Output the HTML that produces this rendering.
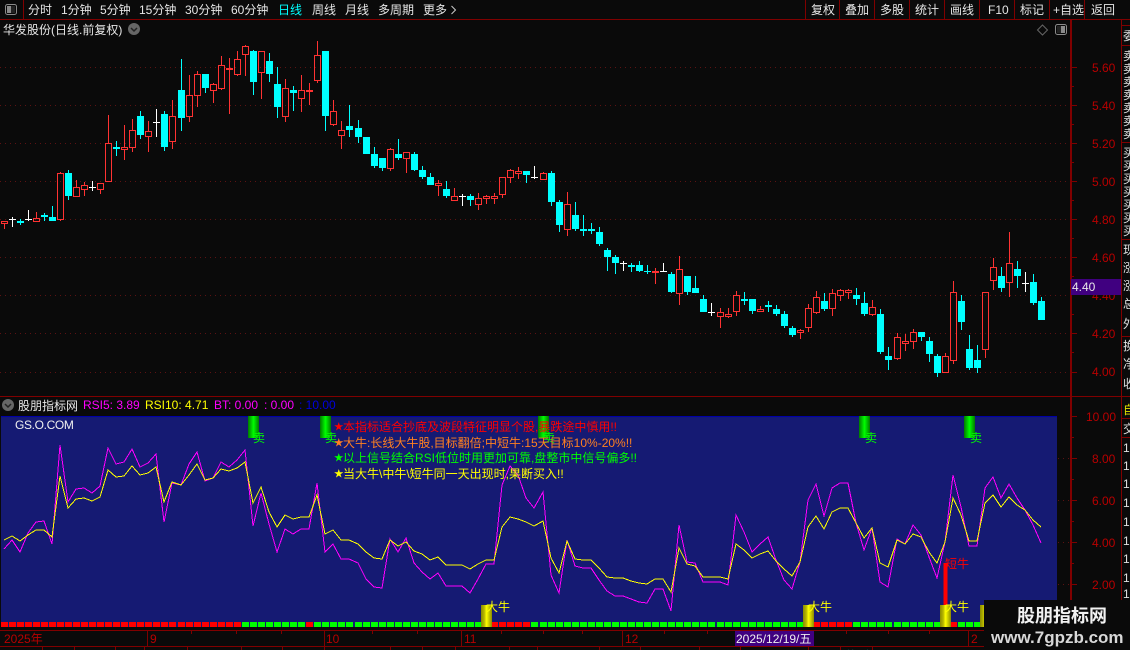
<!DOCTYPE html>
<html><head><meta charset="utf-8"><title>K线</title>
<style>
html,body{margin:0;padding:0;background:#0a0a0a;width:1130px;height:650px;overflow:hidden}
svg{display:block;position:absolute;left:0;top:0}
text{font-family:"Liberation Sans","WenQuanYi Zen Hei","Noto Sans CJK SC",sans-serif;font-size:12px;white-space:pre}
.t{fill:#e6e6e6}
.a{fill:#b80000}
.s{font-size:9.5px}
</style></head>
<body>
<svg width="1130" height="650" viewBox="0 0 1130 650" xmlns="http://www.w3.org/2000/svg">
<defs>
<linearGradient id="gg" x1="0" x2="1" y1="0" y2="0"><stop offset="0" stop-color="#007a00"/><stop offset=".3" stop-color="#00c800"/><stop offset=".5" stop-color="#00ff00"/><stop offset=".7" stop-color="#00c800"/><stop offset="1" stop-color="#007a00"/></linearGradient>
<linearGradient id="yy" x1="0" x2="1" y1="0" y2="0"><stop offset="0" stop-color="#8a8a00"/><stop offset=".3" stop-color="#b8b800"/><stop offset=".5" stop-color="#ffff00"/><stop offset=".7" stop-color="#d0d000"/><stop offset="1" stop-color="#8a8a00"/></linearGradient>
<clipPath id="rc"><rect x="1123" y="20" width="7" height="630"/></clipPath>
</defs>
<rect width="1130" height="650" fill="#0a0a0a"/>

<!-- toolbar -->
<g shape-rendering="crispEdges" fill="#800000">
<rect x="0" y="19" width="1130" height="1"/>
<rect x="23" y="0" width="1" height="19"/>
<rect x="805" y="0" width="1" height="19"/><rect x="839" y="0" width="1" height="19"/><rect x="874" y="0" width="1" height="19"/><rect x="909" y="0" width="1" height="19"/><rect x="944" y="0" width="1" height="19"/><rect x="979" y="0" width="1" height="19"/><rect x="1014" y="0" width="1" height="19"/><rect x="1049" y="0" width="1" height="19"/><rect x="1084" y="0" width="1" height="19"/>
</g>
<rect x="5.5" y="4.5" width="11" height="10" rx="2" fill="none" stroke="#8a8a8a"/>
<rect x="7" y="6" width="4" height="7" fill="#8a8a8a"/>
<rect x="11" y="6" width="4" height="7" fill="#222"/>
<g class="t">
<text x="28" y="14">分时</text><text x="61" y="14">1分钟</text><text x="100" y="14">5分钟</text><text x="139" y="14">15分钟</text><text x="185" y="14">30分钟</text><text x="231" y="14">60分钟</text>
<text x="278" y="14" style="fill:#00ffff">日线</text><text x="312" y="14">周线</text><text x="345" y="14">月线</text><text x="378" y="14">多周期</text><text x="423" y="14">更多</text>
<text x="811" y="14">复权</text><text x="845" y="14">叠加</text><text x="880" y="14">多股</text><text x="915" y="14">统计</text><text x="950" y="14">画线</text><text x="988" y="14">F10</text><text x="1020" y="14">标记</text><text x="1053" y="14">+自选</text><text x="1091" y="14">返回</text>
<text x="3" y="34">华发股份(日线.前复权)</text>
</g>
<path d="M451.5 6l4 4-4 4" fill="none" stroke="#ccc"/>
<circle cx="134" cy="29" r="6" fill="#666"/>
<path d="M131 28l3 3 3-3" fill="none" stroke="#222" stroke-width="1.5"/>
<path d="M1042.5 25l5 5-5 5-5-5z" fill="none" stroke="#666"/>
<rect x="1055.5" y="24.5" width="11" height="10" rx="2" fill="none" stroke="#8a8a8a"/>
<rect x="1057" y="26" width="4" height="7" fill="#222"/><rect x="1061" y="26" width="4" height="7" fill="#8a8a8a"/>

<!-- grid -->
<g stroke="#5c1212" stroke-dasharray="1 4" shape-rendering="crispEdges">
<path d="M0 67.5H1068M0 105.5H1068M0 143.5H1068M0 181.5H1068M0 219.5H1068M0 257.5H1068M0 295.5H1068M0 333.5H1068M0 372.5H1068"/>
</g>

<!-- cyan -->
<g shape-rendering="crispEdges" fill="none" stroke="#00ffff">
<path d="M20.5 219V225M44.5 213V221M52.5 206V221M68.5 170V200M116.5 141V156M140.5 111V139M164.5 111V151M181.5 59V131M205.5 74V93M253.5 50V95M269.5 53V82M277.5 67V118M293.5 86V111M325.5 51V131M349.5 105V137M358.5 120V143M374.5 147V168M382.5 158V171M398.5 139V160M414.5 152V171M422.5 166V179M430.5 173V185M446.5 181V198M470.5 194V206M526.5 171V183M551.5 171V206M559.5 200V232M575.5 202V231M583.5 215V236M591.5 223V234M599.5 227V246M607.5 248V271M615.5 255V274M631.5 263V272M639.5 261V272M647.5 265V274M671.5 272V293M687.5 276V295M695.5 276V293M703.5 295V312M744.5 292V305M752.5 299V314M768.5 301V312M776.5 305V316M784.5 311V328M792.5 326V337M824.5 293V311M856.5 288V305M864.5 292V316M880.5 309V354M888.5 347V370M921.5 332V341M929.5 337V362M937.5 354V377M961.5 295V330M969.5 335V370M977.5 345V373M1001.5 267V292M1017.5 261V288M1033.5 274V305M1041.5 297V320"/>
<path stroke-width="7" d="M20.5 221V223M44.5 215V217M52.5 217V221M68.5 173V196M116.5 147V149M140.5 116V135M164.5 114V147M181.5 90V118M205.5 74V88M253.5 51V82M269.5 61V74M277.5 84V107M293.5 90V93M325.5 51V116M349.5 126V130M358.5 128V137M366.5 137V154M374.5 154V166M382.5 158V168M398.5 154V158M414.5 154V170M422.5 170V177M430.5 177V185M446.5 189V196M470.5 196V200M526.5 171V175M551.5 173V202M559.5 202V225M575.5 215V229M583.5 229V231M591.5 229V231M599.5 232V244M607.5 250V257M615.5 257V263M631.5 265V267M639.5 265V271M647.5 271V272M671.5 274V292M687.5 276V292M695.5 288V293M703.5 299V312M744.5 299V301M752.5 299V311M768.5 305V307M776.5 309V314M784.5 314V326M792.5 328V335M824.5 301V309M856.5 295V299M864.5 303V314M880.5 314V352M888.5 356V360M921.5 332V337M929.5 341V354M937.5 356V373M961.5 301V322M969.5 349V368M977.5 360V368M1001.5 276V288M1017.5 269V276M1033.5 282V303M1041.5 301V320"/>
</g>

<!-- white -->
<g shape-rendering="crispEdges" fill="none" stroke="#ffffff">
<path d="M12.5 217V227M9 219.5h7M28.5 210V221M25 219.5h7M92.5 181V191M89 187.5h7M156.5 109V137M153 122.5h7M462.5 194V206M459 196.5h7M534.5 166V179M531 177.5h7M623.5 261V271M620 263.5h7M663.5 263V272M660 271.5h7M711.5 303V316M708 312.5h7M1025.5 272V292M1022 283.5h7"/>
</g>

<!-- red -->
<g shape-rendering="crispEdges" fill="none" stroke="#ff3232">
<path d="M4.5 224V229M36.5 212V218M76.5 180V187M84.5 182V185M84.5 190V196M100.5 190V194M60.5 172V173M60.5 220V221M108.5 115V143M124.5 125V147M124.5 150V160M132.5 119V130M132.5 148V152M148.5 121V131M148.5 137V152M172.5 100V116M172.5 142V149M189.5 75V95M189.5 117V122M197.5 71V74M197.5 96V107M213.5 83V84M213.5 91V103M221.5 56V65M221.5 89V90M229.5 58V68M229.5 70V114M237.5 51V59M237.5 75V76M245.5 45V46M245.5 55V76M261.5 73V99M285.5 79V88M285.5 117V122M301.5 75V90M301.5 99V112M309.5 83V105M317.5 41V55M317.5 81V83M333.5 100V111M333.5 125V126M341.5 121V130M341.5 136V149M390.5 148V149M390.5 169V171M406.5 159V173M438.5 180V183M438.5 186V196M454.5 188V196M478.5 193V198M478.5 205V210M486.5 195V196M486.5 199V204M494.5 193V196M494.5 199V204M502.5 195V198M510.5 169V170M510.5 178V183M518.5 167V171M518.5 174V179M543.5 172V173M567.5 192V204M567.5 230V236M655.5 268V284M679.5 256V269M679.5 294V305M720.5 308V312M720.5 317V328M728.5 308V314M728.5 317V318M736.5 291V295M736.5 312V316M760.5 306V309M800.5 329V330M800.5 333V339M808.5 304V308M808.5 328V332M816.5 291V297M816.5 313V314M832.5 289V293M832.5 309V316M840.5 289V290M840.5 296V301M848.5 289V290M848.5 293V299M872.5 300V307M872.5 315V316M897.5 333V337M897.5 359V360M905.5 334V341M905.5 344V351M913.5 329V332M913.5 342V349M945.5 353V356M953.5 281V292M953.5 361V364M985.5 350V358M993.5 258V267M993.5 281V290M1009.5 232V263M1009.5 283V297"/>
<path d="M1.5 221.5h6v2h-6zM33.5 218.5h6v3h-6zM57.5 173.5h6v46h-6zM73.5 187.5h6v9h-6zM81.5 185.5h6v4h-6zM97.5 183.5h6v6h-6zM105.5 143.5h6v38h-6zM121.5 147.5h6v2h-6zM129.5 130.5h6v17h-6zM145.5 131.5h6v5h-6zM169.5 116.5h6v25h-6zM186.5 95.5h6v21h-6zM194.5 74.5h6v21h-6zM210.5 84.5h6v6h-6zM218.5 65.5h6v23h-6zM226.5 68.5h6v1h-6zM234.5 59.5h6v15h-6zM242.5 46.5h6v8h-6zM258.5 51.5h6v21h-6zM282.5 88.5h6v28h-6zM298.5 90.5h6v8h-6zM314.5 55.5h6v25h-6zM330.5 111.5h6v13h-6zM338.5 130.5h6v5h-6zM387.5 149.5h6v19h-6zM403.5 152.5h6v6h-6zM435.5 183.5h6v2h-6zM451.5 196.5h6v4h-6zM475.5 198.5h6v6h-6zM483.5 196.5h6v2h-6zM491.5 196.5h6v2h-6zM499.5 177.5h6v17h-6zM507.5 170.5h6v7h-6zM515.5 171.5h6v2h-6zM540.5 173.5h6v6h-6zM564.5 204.5h6v25h-6zM676.5 269.5h6v24h-6zM717.5 312.5h6v4h-6zM725.5 314.5h6v2h-6zM733.5 295.5h6v16h-6zM757.5 309.5h6v2h-6zM797.5 330.5h6v2h-6zM805.5 308.5h6v19h-6zM813.5 297.5h6v15h-6zM829.5 293.5h6v15h-6zM837.5 290.5h6v5h-6zM845.5 290.5h6v2h-6zM869.5 307.5h6v7h-6zM894.5 337.5h6v21h-6zM902.5 341.5h6v2h-6zM910.5 332.5h6v9h-6zM942.5 356.5h6v16h-6zM950.5 292.5h6v68h-6zM982.5 292.5h6v57h-6zM990.5 267.5h6v13h-6zM1006.5 263.5h6v19h-6z"/>
<path stroke-width="2" d="M306 91h7M652 272h7"/>
</g>

<!-- right axis main -->
<g shape-rendering="crispEdges" fill="#800000">
<rect x="1070" y="20" width="2" height="610"/>
<rect x="1121" y="20" width="1" height="630"/>
<rect x="0" y="396" width="1130" height="1"/>
<rect x="1071" y="67" width="6" height="1"/><rect x="1071" y="86" width="3" height="1"/><rect x="1071" y="105" width="6" height="1"/><rect x="1071" y="124" width="3" height="1"/><rect x="1071" y="143" width="6" height="1"/><rect x="1071" y="162" width="3" height="1"/><rect x="1071" y="181" width="6" height="1"/><rect x="1071" y="200" width="3" height="1"/><rect x="1071" y="219" width="6" height="1"/><rect x="1071" y="238" width="3" height="1"/><rect x="1071" y="257" width="6" height="1"/><rect x="1071" y="276" width="3" height="1"/><rect x="1071" y="333" width="6" height="1"/><rect x="1071" y="314" width="3" height="1"/><rect x="1071" y="352" width="3" height="1"/><rect x="1071" y="372" width="6" height="1"/>
<rect x="1122" y="25" width="8" height="1"/><rect x="1122" y="45" width="8" height="1"/><rect x="1122" y="142" width="8" height="1"/><rect x="1122" y="239" width="8" height="1"/><rect x="1122" y="336" width="8" height="1"/><rect x="1122" y="418" width="8" height="1"/><rect x="1122" y="437" width="8" height="1"/>
</g>
<g class="a">
<text x="1092" y="72">5.60</text><text x="1092" y="110">5.40</text><text x="1092" y="148">5.20</text><text x="1092" y="186">5.00</text><text x="1092" y="224">4.80</text><text x="1092" y="262">4.60</text><text x="1092" y="300">4.40</text><text x="1092" y="338">4.20</text><text x="1092" y="376">4.00</text>
</g>
<rect x="1071" y="279" width="50" height="16" fill="#400080"/>
<text x="1072" y="291" fill="#e8e8e8">4.40</text>

<!-- right column -->
<g clip-path="url(#rc)" fill="#e0e0e0">
<text x="1123" y="40">委</text>
<text x="1123" y="60">卖</text><text x="1123" y="73">卖</text><text x="1123" y="86">卖</text><text x="1123" y="99">卖</text><text x="1123" y="112">卖</text><text x="1123" y="125">卖</text><text x="1123" y="138">卖</text>
<text x="1123" y="157">买</text><text x="1123" y="170">买</text><text x="1123" y="183">买</text><text x="1123" y="196">买</text><text x="1123" y="209">买</text><text x="1123" y="222">买</text><text x="1123" y="235">买</text>
<text x="1123" y="254">现</text><text x="1123" y="272">涨</text><text x="1123" y="290">涨</text><text x="1123" y="308">总</text><text x="1123" y="328">外</text>
<text x="1123" y="350">换</text><text x="1123" y="368">净</text><text x="1123" y="388">收</text>
<text x="1123" y="433">交</text>
<text x="1123" y="452">1</text><text x="1123" y="470">1</text><text x="1123" y="488">1</text><text x="1123" y="507">1</text><text x="1123" y="526">1</text><text x="1123" y="545">1</text><text x="1123" y="563">1</text><text x="1123" y="582">1</text><text x="1123" y="598">1</text>
<text x="1123" y="414" style="fill:#e0e000">自</text>
</g>

<!-- sub header -->
<circle cx="8" cy="405" r="6" fill="#666"/>
<path d="M5 404l3 3 3-3" fill="none" stroke="#222" stroke-width="1.5"/>
<text x="18" y="410" class="t">股朋指标网</text>
<text x="83" y="409" fill="#ff00ff">RSI5: 3.89</text>
<text x="145" y="409" fill="#ffff00">RSI10: 4.71</text>
<text x="214" y="409" fill="#ff00ff">BT: 0.00</text>
<text x="264" y="409" fill="#ff00ff">: 0.00</text>
<text x="299" y="409" fill="#0000e0">: 10.00</text>

<!-- blue panel -->
<rect x="1" y="416" width="1056" height="211" fill="#151a73"/>
<rect x="1" y="416" width="1056" height="1" fill="#0000a8"/>
<text x="15" y="429" fill="#f0f0f0" style="letter-spacing:-.35px">GS.O.COM</text>

<!-- sell bars -->
<g shape-rendering="crispEdges" fill="url(#gg)">
<rect x="248" y="416" width="11" height="22"/><rect x="320" y="416" width="11" height="22"/><rect x="538" y="416" width="11" height="22"/><rect x="859" y="416" width="11" height="22"/><rect x="964" y="416" width="11" height="22"/>
</g>
<g fill="#00ff00">
<text x="253" y="442">卖</text><text x="325" y="442">卖</text><text x="543" y="442">卖</text><text x="865" y="442">卖</text><text x="970" y="442">卖</text>
</g>

<!-- lines -->
<polyline shape-rendering="crispEdges" fill="none" stroke="#ff00ff" points="4,549 12,540 20,552 28,533 36,522 44,521 52,544 60,445 68,502 76,489 84,488 92,493 100,486 108,448 116,464 124,462 132,449 140,467 148,463 156,454 164,522 172,483 181,485 189,464 197,452 205,481 213,478 221,462 229,467 237,460 245,450 253,526 261,493 269,524 277,552 285,529 293,534 301,529 309,529 317,483 325,552 333,544 341,559 349,559 358,563 366,579 374,587 382,588 390,539 398,552 406,538 414,563 422,572 430,579 438,573 446,586 454,586 462,586 470,593 478,579 486,564 494,564 502,485 510,466 518,475 526,498 534,508 543,492 551,575 559,593 567,540 575,566 583,568 591,568 599,580 607,591 615,596 623,596 631,599 639,602 647,603 655,589 663,589 671,611 679,525 687,562 695,563 703,582 711,582 720,582 728,585 736,515 744,532 752,552 760,544 768,537 776,560 784,580 792,589 800,562 808,500 816,484 824,516 832,488 840,483 848,483 856,523 864,550 872,528 880,582 888,587 897,539 905,544 913,525 921,535 929,557 937,578 945,542 953,475 961,507 969,546 977,546 985,488 993,477 1001,498 1009,484 1017,498 1025,510 1033,525 1041,543"/>
<polyline shape-rendering="crispEdges" fill="none" stroke="#ffff00" points="4,540 12,536 20,541 28,535 36,530 44,530 52,537 60,476 68,508 76,499 84,498 92,501 100,497 108,470 116,477 124,476 132,466 140,475 148,473 156,467 164,502 172,482 181,485 189,475 197,464 205,480 213,478 221,469 229,471 237,468 245,462 253,503 261,487 269,512 277,527 285,515 293,519 301,517 309,517 317,495 325,534 333,530 341,540 349,540 358,544 366,552 374,558 382,559 390,540 398,546 406,542 414,551 422,554 430,560 438,557 446,565 454,565 462,565 470,569 478,564 486,560 494,560 502,527 510,517 518,519 526,522 534,526 543,521 551,558 559,573 567,541 575,559 583,560 591,560 599,568 607,577 615,578 623,578 631,581 639,583 647,584 655,579 663,579 671,592 679,548 687,564 695,566 703,577 711,577 720,577 728,579 736,544 744,550 752,558 760,554 768,551 776,561 784,569 792,576 800,562 808,527 816,516 824,529 832,512 840,508 848,508 856,523 864,538 872,528 880,563 888,567 897,540 905,544 913,534 921,537 929,552 937,563 945,542 953,498 961,515 969,541 977,541 985,503 993,495 1001,507 1009,497 1017,505 1025,510 1033,520 1041,527"/>

<!-- notes -->
<text x="334" y="430" fill="#ff0000" class="s">★</text><text x="343" y="431" fill="#ff0000">本指标适合抄底及波段特征明显个股,暴跌途中慎用!!</text>
<text x="334" y="446" fill="#ff8020" class="s">★</text><text x="343" y="447" fill="#ff8020">大牛:长线大牛股,目标翻倍;中短牛:15天目标10%-20%!!</text>
<text x="334" y="461" fill="#00ff00" class="s">★</text><text x="343" y="462" fill="#00ff00">以上信号结合RSI低位时用更加可靠,盘整市中信号偏多!!</text>
<text x="334" y="477" fill="#ffff00" class="s">★</text><text x="343" y="478" fill="#ffff00">当大牛\中牛\短牛同一天出现时,果断买入!!</text>

<!-- squares -->
<g shape-rendering="crispEdges" fill="none" stroke-width="5" stroke-dasharray="7 1">
<path stroke="#ff0000" d="M1 624.5H177M178 624.5H241M306 624.5H313M491 624.5H531M813 624.5H853M950 624.5H958"/>
<path stroke="#00ff00" d="M242 624.5H305M314 624.5H354M355 624.5H482M531 624.5H539M540 624.5H716M717 624.5H805M853 624.5H893M894 624.5H941M958 624.5H981"/>
</g>

<!-- gold bars -->
<g shape-rendering="crispEdges">
<rect x="945" y="563" width="4" height="42" fill="#ff0000" transform="translate(-1.5 0)"/>
<g fill="url(#yy)"><rect x="481" y="605" width="11" height="22"/><rect x="803" y="605" width="11" height="22"/><rect x="940" y="605" width="11" height="22"/><rect x="980" y="605" width="11" height="22"/></g>
</g>
<g fill="#ffff00">
<text x="486" y="611">大牛</text><text x="808" y="611">大牛</text><text x="945" y="611">大牛</text><text x="986" y="611">大牛</text>
</g>
<text x="945" y="568" fill="#ff0000">短牛</text>

<!-- sub axis -->
<g shape-rendering="crispEdges" fill="#800000">
<rect x="1071" y="416" width="6" height="1"/><rect x="1071" y="437" width="3" height="1"/><rect x="1071" y="458" width="6" height="1"/><rect x="1071" y="479" width="3" height="1"/><rect x="1071" y="500" width="6" height="1"/><rect x="1071" y="521" width="3" height="1"/><rect x="1071" y="542" width="6" height="1"/><rect x="1071" y="563" width="3" height="1"/><rect x="1071" y="584" width="6" height="1"/><rect x="1071" y="605" width="3" height="1"/>
</g>
<path d="M1058 458.5H1070M1058 500.5H1070M1058 542.5H1070M1058 584.5H1070" stroke="#5c1212" stroke-dasharray="1 4" shape-rendering="crispEdges"/>
<g class="a">
<text x="1086" y="421">10.00</text><text x="1092" y="463">8.00</text><text x="1092" y="505">6.00</text><text x="1092" y="547">4.00</text><text x="1092" y="589">2.00</text>
</g>

<!-- date axis -->
<g shape-rendering="crispEdges" fill="#800000">
<rect x="0" y="630" width="1130" height="1"/><rect x="0" y="646" width="1130" height="1"/>
<rect x="147" y="630" width="1" height="16"/><rect x="324" y="630" width="1" height="16"/><rect x="461" y="630" width="1" height="16"/><rect x="622" y="630" width="1" height="16"/><rect x="968" y="630" width="1" height="16"/>
<rect x="191" y="631" width="1" height="3"/><rect x="236" y="631" width="1" height="3"/><rect x="281" y="631" width="1" height="3"/><rect x="372" y="631" width="1" height="3"/><rect x="417" y="631" width="1" height="3"/><rect x="501" y="631" width="1" height="3"/><rect x="543" y="631" width="1" height="3"/><rect x="582" y="631" width="1" height="3"/><rect x="664" y="631" width="1" height="3"/><rect x="707" y="631" width="1" height="3"/><rect x="846" y="631" width="1" height="3"/><rect x="888" y="631" width="1" height="3"/><rect x="929" y="631" width="1" height="3"/>
<rect x="42" y="647" width="1" height="3"/><rect x="74" y="647" width="1" height="3"/><rect x="115" y="647" width="1" height="3"/><rect x="144" y="647" width="1" height="3"/><rect x="187" y="647" width="1" height="3"/><rect x="241" y="647" width="1" height="3"/><rect x="282" y="647" width="1" height="3"/><rect x="324" y="647" width="1" height="3"/><rect x="390" y="647" width="1" height="3"/><rect x="422" y="647" width="1" height="3"/><rect x="455" y="647" width="1" height="3"/><rect x="509" y="647" width="1" height="3"/><rect x="537" y="647" width="1" height="3"/><rect x="599" y="647" width="1" height="3"/><rect x="640" y="647" width="1" height="3"/><rect x="699" y="647" width="1" height="3"/><rect x="740" y="647" width="1" height="3"/><rect x="808" y="647" width="1" height="3"/><rect x="840" y="647" width="1" height="3"/><rect x="872" y="647" width="1" height="3"/>
</g>
<g class="a">
<text x="4" y="643">2025年</text><text x="150" y="643">9</text><text x="326" y="643">10</text><text x="464" y="643">11</text><text x="625" y="643">12</text><text x="971" y="643">2</text>
</g>
<rect x="735" y="631" width="79" height="15" fill="#400080"/>
<text x="736" y="643" fill="#eeeeee">2025/12/19/五</text>
<text x="846" y="660" fill="#00ffff">换手</text>
<text x="7" y="660" fill="#e6e6e6">量</text>
<text x="825" y="660" fill="#e6e6e6">卖</text>

<!-- watermark -->
<rect x="984" y="600" width="146" height="50" fill="#0a0a0a"/>
<text x="1017" y="622" fill="#f2f2f2" style="font-size:18px;font-weight:bold;font-family:'Noto Sans CJK SC','WenQuanYi Zen Hei',sans-serif">股朋指标网</text>
<text x="991" y="643" fill="#d8d8d8" style="font-size:17px;font-weight:bold">www.7gpzb.com</text>
</svg>
</body></html>
